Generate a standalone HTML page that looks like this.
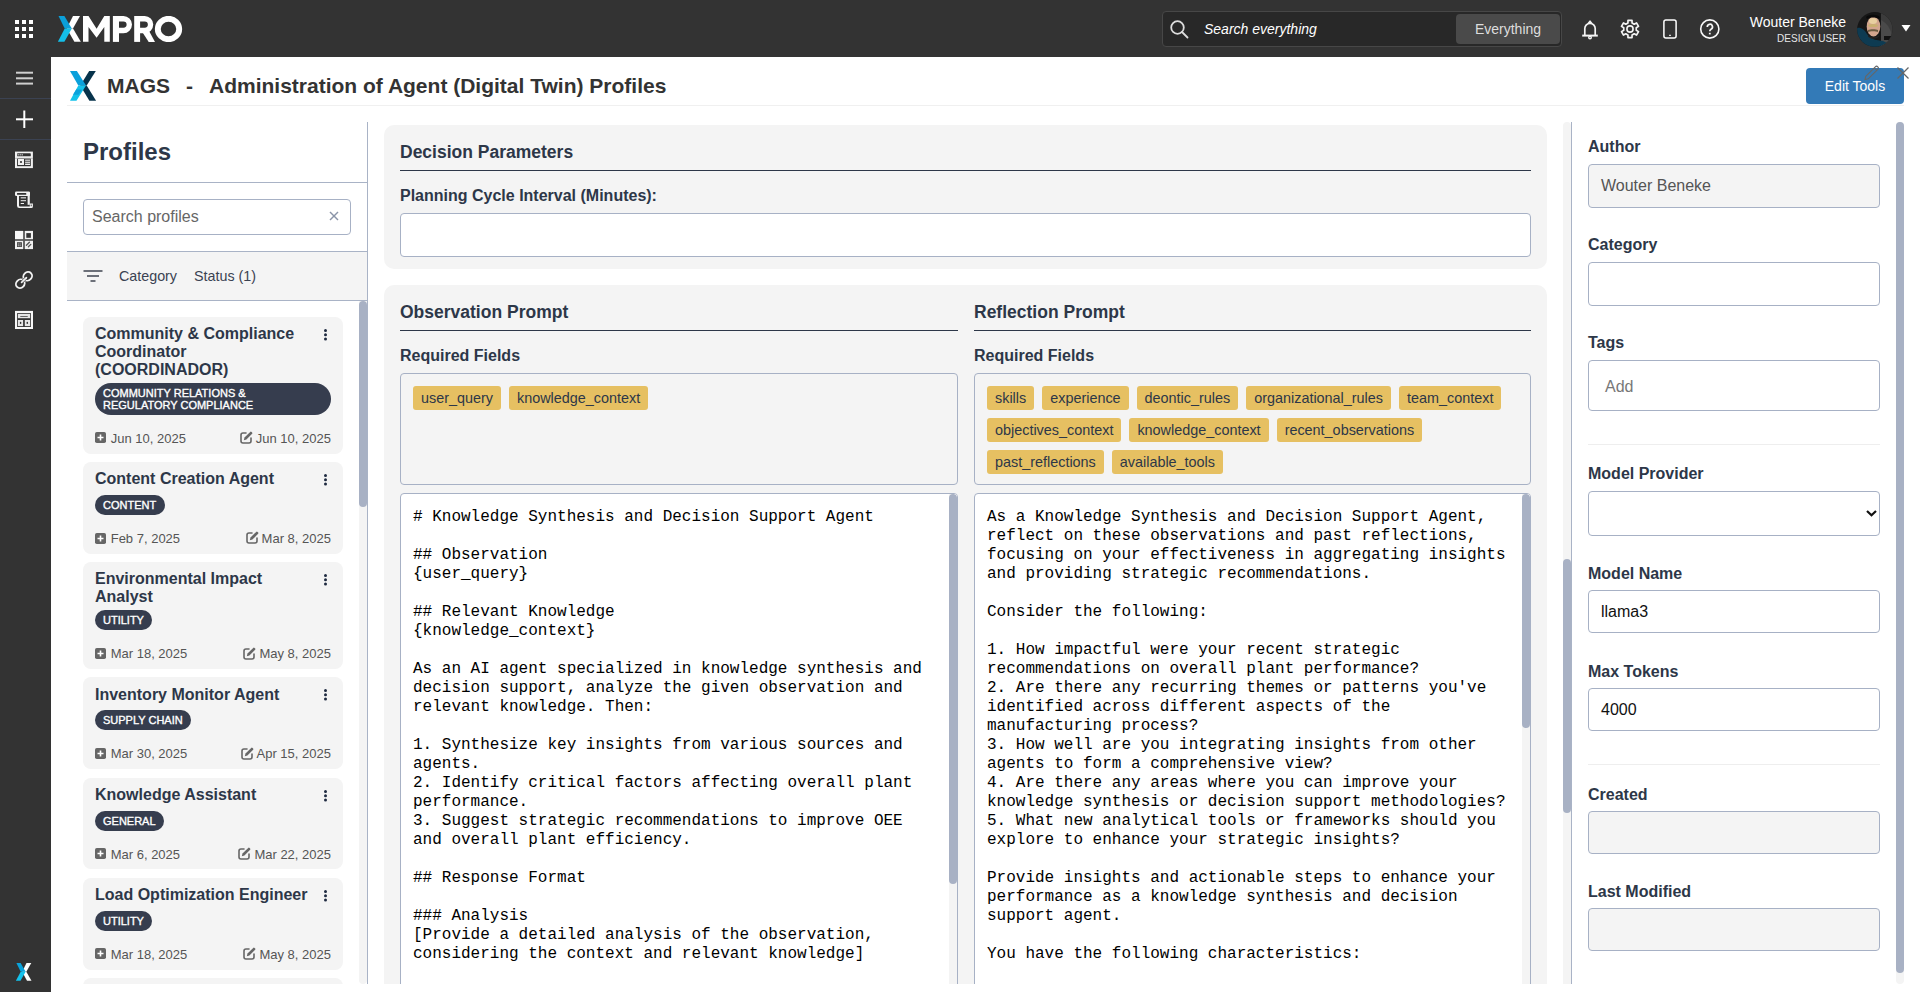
<!DOCTYPE html>
<html><head><meta charset="utf-8">
<style>
*{box-sizing:border-box;margin:0;padding:0}
html,body{width:1920px;height:992px;overflow:hidden;background:#fff;font-family:"Liberation Sans",sans-serif;color:#2d3748}
.abs{position:absolute}
#top{position:absolute;z-index:5;left:0;top:0;width:1920px;height:57px;background:#333333}
#side{position:absolute;left:0;top:0;width:51px;height:992px;background:#333333}
.sep{position:absolute;left:0;width:51px;height:1px;background:#3b4252}
.card{position:absolute;left:83px;width:260px;background:#f4f4f4;border-radius:8px}
.ct{position:absolute;left:12px;top:9px;width:232px;font-weight:bold;font-size:16px;line-height:18px;color:#2d3748}
.pill{position:absolute;left:12px;background:#363d4e;color:#fff;font-size:11px;-webkit-text-stroke:0.35px #fff;border-radius:16px;padding:0 8.5px 0 8px;line-height:20px;height:20px}
.dt{position:absolute;font-size:13px;color:#555;line-height:15px}
.kb{position:absolute;left:240px;width:3px;height:11px}
.box{position:absolute;background:#f4f4f4;border-radius:10px}
.lbl{position:absolute;font-weight:bold;color:#2d3748}
.inp{position:absolute;border:1px solid #a7b1c5;border-radius:4px;background:#fff}
.tag{display:inline-block;background:#e6c062;color:#2d3748;border-radius:3px;font-size:14.4px;height:24px;line-height:24px;padding:0 8px;margin-right:8px;margin-bottom:8px}
.mono{font-family:"Liberation Mono",monospace;font-size:16px;line-height:19px;white-space:pre;color:#000}
</style></head><body>
<div id="top">
<svg class="abs" style="left:15px;top:20px" width="18" height="18" viewBox="0 0 18 18" fill="#fff"><rect x="0" y="0" width="4" height="4"/><rect x="7" y="0" width="4" height="4"/><rect x="14" y="0" width="4" height="4"/><rect x="0" y="7" width="4" height="4"/><rect x="7" y="7" width="4" height="4"/><rect x="14" y="7" width="4" height="4"/><rect x="0" y="14" width="4" height="4"/><rect x="7" y="14" width="4" height="4"/><rect x="14" y="14" width="4" height="4"/></svg>
<svg class="abs" style="left:58px;top:16px" width="126" height="26" viewBox="0 0 126 26">
<polygon fill="#fff" points="15,0 22,0 15,12.5 8.8,12.5"/>
<polygon fill="#fff" points="8.7,12.5 15,12.5 22.8,25.8 16.4,25.8"/>
<polygon fill="#0b9fd9" points="0.5,0 6.4,0 13.8,12.5 6.7,12.5"/>
<polygon fill="#14bfe9" points="6.7,12.5 13.8,12.5 6.4,25.8 -0.1,25.8"/>
<polygon fill="#fff" points="25,0 30.5,0 38.6,12.8 46.3,0 51.8,0 51.8,25.8 46.3,25.8 46.3,10.9 38.6,21.8 30.5,10.9 30.5,25.8 25,25.8"/>
<rect fill="#fff" x="54.9" y="0" width="6.1" height="25.9"/>
<path fill="none" stroke="#fff" stroke-width="5.4" d="M58,2.75 H65.45 A5.85,5.85 0 0 1 65.45,14.45 H58"/>
<rect fill="#fff" x="76.2" y="0" width="5.9" height="25.9"/>
<path fill="none" stroke="#fff" stroke-width="5.4" d="M79,2.75 H86.7 A5.85,5.85 0 0 1 86.7,14.45 H79"/>
<polygon fill="#fff" points="84.6,16.5 91.2,15.2 97,25.9 90.7,25.9"/>
<ellipse fill="none" stroke="#fff" stroke-width="5.9" cx="110.5" cy="13" rx="10.7" ry="10.2"/>
</svg>
<div class="abs" style="left:1162px;top:11px;width:400px;height:36px;background:#282828;border:1px solid #474747;border-radius:4px"></div>
<svg class="abs" style="left:1170px;top:20px" width="19" height="19" viewBox="0 0 19 19" fill="none" stroke="#ddd" stroke-width="1.8"><circle cx="7.5" cy="7.5" r="6.3"/><line x1="12" y1="12" x2="17.5" y2="17.5" stroke-linecap="round"/></svg>
<div class="abs" style="left:1204px;top:20px;font-size:14px;line-height:18px;font-style:italic;color:#fff">Search everything</div>
<div class="abs" style="left:1456px;top:14px;width:104px;height:30px;background:#4a4a4a;border-radius:4px;color:#ddd;font-size:14px;line-height:30px;text-align:center">Everything</div>
<svg class="abs" style="left:1581px;top:18.5px" width="18" height="22" viewBox="0 0 18 22" fill="none" stroke="#f4f4f4" stroke-width="1.7"><path d="M3.8,16.2 V9.6 A5.2,5.2 0 0 1 14.2,9.6 V16.2"/><path d="M1.2,16.6 H16.8" stroke-width="2"/><path d="M7.2,4.4 L9,2.2 L10.8,4.4" stroke-width="1.6" stroke-linejoin="round"/><circle cx="9" cy="18.5" r="1.3" stroke-width="1.4"/></svg>
<svg class="abs" style="left:1619px;top:18px" width="22" height="22" viewBox="0 0 22 22" fill="none" stroke="#f4f4f4" stroke-width="1.7" stroke-linejoin="round"><path d="M8.92,4.95 L9.00,2.33 L13.00,2.33 L13.08,4.95 L15.20,6.17 L17.51,4.93 L19.51,8.40 L17.28,9.78 L17.28,12.22 L19.51,13.60 L17.51,17.07 L15.20,15.83 L13.08,17.05 L13.00,19.67 L9.00,19.67 L8.92,17.05 L6.80,15.83 L4.49,17.07 L2.49,13.60 L4.72,12.22 L4.72,9.78 L2.49,8.40 L4.49,4.93 L6.80,6.17 Z"/><circle cx="11" cy="11" r="3.1" stroke-width="1.6"/></svg>
<svg class="abs" style="left:1663px;top:19px" width="14" height="20" viewBox="0 0 14 20" fill="none" stroke="#fff" stroke-width="1.5"><rect x="0.9" y="0.9" width="12.2" height="18.2" rx="2"/><line x1="6.2" y1="16.4" x2="7.8" y2="16.4" stroke-width="1.3"/></svg>
<svg class="abs" style="left:1699px;top:18px" width="22" height="22" viewBox="0 0 22 22" fill="none" stroke="#f8f8f8" stroke-width="1.6"><circle cx="10.8" cy="11" r="9.1"/><path d="M8.3,9 A2.6,2.6 0 1 1 12,11.2 C11.2,11.7 10.8,12.1 10.8,13.3" stroke-linecap="butt" stroke-width="1.7"/><rect x="9.9" y="14.8" width="1.8" height="1.6" fill="#f8f8f8" stroke="none"/></svg>
<div class="abs" style="left:1700px;top:14px;width:146px;text-align:right;font-size:14px;line-height:16px;color:#fff">Wouter Beneke</div>
<div class="abs" style="left:1700px;top:32px;width:146px;text-align:right;font-size:10px;line-height:13px;color:#e6e6e6">DESIGN USER</div>
<svg class="abs" style="left:1857px;top:12px" width="36" height="35" viewBox="0 0 36 35"><defs><clipPath id="avc"><ellipse cx="17.8" cy="17.4" rx="17.7" ry="17.3"/></clipPath></defs><g clip-path="url(#avc)">
<rect x="0" y="0" width="36" height="35" fill="#161616"/>
<rect x="24" y="0" width="12" height="35" fill="#3c3c3c"/>
<path d="M24,8 C28,10 32,14 34,20 L36,35 L24,35 Z" fill="#4a4a4a"/>
<rect x="27" y="24" width="8" height="4" fill="#111"/>
<path d="M0,16 C4,15 8,18 10,22 C14,28 20,28 26,29 L30,31 L30,36 L0,36 Z" fill="#0e3b52"/>
<ellipse cx="16.5" cy="14.5" rx="6.8" ry="10" fill="#d2a58e"/>
<ellipse cx="16" cy="9" rx="4" ry="3" fill="#e8cfa0"/>
<ellipse cx="16" cy="13.5" rx="5" ry="1.5" fill="#c9b070"/>
<path d="M11,18 C13,17 19,17 21,18 L21,20 C19,19 13,19 11,20 Z" fill="#6a5a40"/>
<path d="M11,23 C14,26 19,26 22,23 L22,24.5 C19,27.5 14,27.5 11,24.5 Z" fill="#222"/>
<path d="M9,5 C12,2 20,2 23,5 L22,7 C19,5 13,5 10,7 Z" fill="#0a0a0a"/>
<circle cx="33" cy="31" r="1.6" fill="#b09a60"/>
</g></svg>
<svg class="abs" style="left:1901px;top:25px" width="10" height="7" viewBox="0 0 10 7"><polygon points="0.5,0 9.5,0 5,6.5" fill="#fff"/></svg>
</div>
<div id="side">
<svg class="abs" style="left:15px;top:71px" width="19" height="15" viewBox="0 0 19 15" stroke="#cfcfcf" stroke-width="2"><line x1="1" y1="1.7" x2="18" y2="1.7"/><line x1="1" y1="7.3" x2="18" y2="7.3"/><line x1="1" y1="12.6" x2="18" y2="12.6"/></svg>
<div class="sep" style="top:98px"></div>
<svg class="abs" style="left:15px;top:110px" width="19" height="19" viewBox="0 0 19 19" stroke="#fff" stroke-width="2"><line x1="1" y1="9.3" x2="18" y2="9.3"/><line x1="9.3" y1="0.5" x2="9.3" y2="18"/></svg>
<div class="sep" style="top:139px"></div>
<svg class="abs" style="left:12px;top:148px" width="24" height="24" viewBox="0 0 24 24"><rect x="3" y="3.6" width="17.9" height="16.5" fill="#f2f2f2"/><rect x="5.1" y="5.3" width="13.7" height="3" rx="0.6" fill="#333"/><rect x="5.6" y="5.9" width="1.2" height="1.6" fill="#bbb"/><rect x="7.6" y="5.9" width="1.2" height="1.6" fill="#bbb"/><rect x="9.6" y="5.9" width="1.2" height="1.6" fill="#bbb"/><rect x="3" y="9.9" width="17.9" height="0.6" fill="#999"/><rect x="5.1" y="10.6" width="13.7" height="7.6" fill="#333"/><rect x="6" y="11" width="6" height="6" fill="#f2f2f2"/><circle cx="9" cy="14" r="1.1" fill="#333"/><rect x="13.1" y="11.5" width="4.9" height="2" fill="#bbb"/><rect x="13.1" y="14.2" width="4.9" height="1.1" fill="#f2f2f2"/><rect x="13.1" y="15.9" width="4.9" height="1.1" fill="#f2f2f2"/></svg>
<svg class="abs" style="left:12px;top:188px" width="24" height="24" viewBox="0 0 24 24" fill="#f2f2f2"><rect x="3" y="3.6" width="15" height="4.4" rx="1.3"/><rect x="5" y="5.1" width="9.3" height="1.7" rx="0.5" fill="#333"/><path d="M5,8 H7 V17.4 A1,1 0 0 0 8,18.4 H17.8 V15.6 H20.9 V18.6 A1.5,1.5 0 0 1 19.4,20.1 H7.4 A2.4,2.4 0 0 1 5,17.7 Z"/><rect x="15.6" y="4.2" width="2.2" height="12.6"/><rect x="18.6" y="16.6" width="1.3" height="1.6" fill="#666"/><rect x="8.7" y="9.1" width="5.3" height="1.4" fill="#c4c4c4"/><rect x="8.7" y="12.2" width="5.3" height="1"/><rect x="8.7" y="15" width="3.3" height="1"/></svg>
<svg class="abs" style="left:12px;top:228px" width="24" height="24" viewBox="0 0 24 24"><rect x="3" y="3" width="18" height="18" fill="#5a5a5a"/><rect x="3" y="2.9" width="8.1" height="8.2" fill="#f8f8f8"/><rect x="12.9" y="2.9" width="8.1" height="8.2" fill="#f2f2f2"/><rect x="14.3" y="5.1" width="4.6" height="4.7" fill="#333"/><rect x="3" y="12.9" width="8.1" height="8.2" fill="#f2f2f2"/><rect x="5" y="14.2" width="4.9" height="4.8" fill="#444"/><path d="M5.8,15.6 h1 v1 h-1 Z M7.6,15.6 h1 v1 h-1 Z M5.8,17.2 h1 v1 h-1 Z M7.6,17.2 h1 v1 h-1 Z" fill="#ddd"/><rect x="12.9" y="12.9" width="8.1" height="8.2" fill="#f2f2f2"/><path d="M14.4,17.2 L17.4,14.2 M16.4,18.8 L18.8,16.4" stroke="#555" stroke-width="1.3" stroke-linecap="round"/></svg>
<svg class="abs" style="left:12px;top:268px" width="24" height="24" viewBox="0 0 24 24" fill="none" stroke="#f2f2f2" stroke-width="1.9">
<ellipse cx="15.7" cy="8.3" rx="4.6" ry="4.1" transform="rotate(-45 15.7 8.3)"/>
<ellipse cx="8.3" cy="15.7" rx="4.6" ry="4.1" transform="rotate(-45 8.3 15.7)"/>
<path d="M10.3,11.6 L12.4,13.7 M11.6,10.3 L13.7,12.4" stroke="#333" stroke-width="1.6"/>
<line x1="9.6" y1="14.4" x2="14.4" y2="9.6" stroke-linecap="round" stroke-width="1.7"/>
</svg>
<svg class="abs" style="left:12px;top:308px" width="24" height="24" viewBox="0 0 24 24"><rect x="3" y="2.9" width="18" height="18.1" fill="#f8f8f8"/><rect x="5.1" y="5.1" width="13.8" height="13.9" fill="#333"/><rect x="5.9" y="5.9" width="12.2" height="4.3" fill="#e6e6e6"/><rect x="8.1" y="8" width="7.8" height="0.9" rx="0.4" fill="#666"/><rect x="5.9" y="12" width="5.2" height="6.1" fill="#e6e6e6"/><rect x="12.8" y="12" width="5.3" height="6.1" fill="#e6e6e6"/><ellipse cx="8.6" cy="14.9" rx="0.8" ry="1.1" fill="#333"/><ellipse cx="15.3" cy="14.9" rx="0.8" ry="1.1" fill="#333"/></svg>
<svg class="abs" style="left:16px;top:963px" width="16" height="18" viewBox="0 0 16 18">
<polygon fill="#fff" points="10.5,0 15.3,0 10.3,8.7 6.2,8.7"/>
<polygon fill="#fff" points="6.2,8.7 10.3,8.7 15.5,17.8 11,17.8"/>
<polygon fill="#0aa3db" points="0.4,0 4.6,0 9.6,8.7 4.7,8.7"/>
<polygon fill="#14c2ec" points="4.7,8.7 9.6,8.7 4.5,17.8 -0.1,17.8"/>
</svg>
</div>

<!-- header -->
<svg class="abs" style="left:70px;top:71px" width="27" height="30" viewBox="0 0 27 30">
<polygon fill="#07334b" points="19.2,0.1 25.8,0.1 16.7,14.4 10.2,14.4"/>
<polygon fill="#07334b" points="10.2,14.4 16.7,14.4 26.1,29.7 19.4,29.7"/>
<polygon fill="#0aa0db" points="0,0.1 6.9,0.1 16,14.4 8.3,14.4"/>
<polygon fill="#14c2ea" points="8.3,14.4 16,14.4 6.5,29.7 0,29.7"/>
<polygon fill="#0ba2dc" points="6.2,18.4 12,18.4 8.6,23.8 2.9,23.8"/>
</svg>
<div class="abs" style="left:107px;top:74px;font-size:21px;line-height:24px;font-weight:bold;color:#333">MAGS</div><div class="abs" style="left:186px;top:74px;font-size:21px;line-height:24px;font-weight:bold;color:#333">-</div><div class="abs" style="left:209px;top:74px;font-size:21px;line-height:24px;font-weight:bold;color:#333">Administration of Agent (Digital Twin) Profiles</div>
<div class="abs" style="left:67px;top:105px;width:1837px;height:1px;background:#f0f0f0"></div>
<div class="abs" style="left:1806px;top:68px;width:98px;height:36px;background:#337ab7;border-radius:4px;color:#fff;font-size:14px;line-height:36px;text-align:center">Edit Tools</div>
<svg class="abs" style="left:1863px;top:65px" width="17" height="17" viewBox="0 0 17 17" fill="none" stroke="#666" stroke-width="1.1"><path d="M2,14.5 L2.8,11.3 L12.3,1.8 A1.4,1.4 0 0 1 14.8,4.3 L5.3,13.8 Z M11.3,2.8 L13.8,5.3"/></svg>
<svg class="abs" style="left:1896px;top:66px" width="14" height="14" viewBox="0 0 14 14" stroke="#666" stroke-width="1.3"><line x1="1.5" y1="1.5" x2="12.5" y2="12.5"/><line x1="12.5" y1="1.5" x2="1.5" y2="12.5"/></svg>

<!-- left panel -->
<div class="abs" style="left:367px;top:122px;width:1px;height:862px;background:#a9b3c6"></div>
<div class="abs" style="left:83px;top:138px;font-size:24px;line-height:28px;font-weight:bold;color:#2d3748">Profiles</div>
<div class="abs" style="left:67px;top:182px;width:300px;height:1px;background:#a9b3c6"></div>
<div class="inp" style="left:83px;top:199px;width:268px;height:36px;border-radius:4px"></div>
<div class="abs" style="left:92px;top:207px;font-size:16px;line-height:19px;color:#666">Search profiles</div>
<svg class="abs" style="left:329px;top:211px" width="10" height="10" viewBox="0 0 10 10" stroke="#8a94a8" stroke-width="1.5"><line x1="1" y1="1" x2="9" y2="9"/><line x1="9" y1="1" x2="1" y2="9"/></svg>
<div class="abs" style="left:67px;top:251px;width:300px;height:50px;background:#f4f4f4;border-top:1px solid #a9b3c6;border-bottom:1px solid #a9b3c6"></div>
<svg class="abs" style="left:83px;top:270px" width="20" height="13" viewBox="0 0 20 13" stroke="#4a4f5a" stroke-width="1.6"><line x1="0.5" y1="1" x2="19.5" y2="1"/><line x1="4" y1="6" x2="16" y2="6"/><line x1="7.5" y1="11" x2="12.5" y2="11"/></svg>
<div class="abs" style="left:119px;top:268px;font-size:14.3px;line-height:16px;color:#3a4252">Category</div>
<div class="abs" style="left:194px;top:268px;font-size:14.3px;line-height:16px;color:#3a4252">Status (1)</div>
<div class="abs" style="left:359px;top:301px;width:8px;height:683px;background:#f4f4f4;border-radius:0 0 4px 4px"></div>
<div class="abs" style="left:359px;top:301px;width:8px;height:206px;background:#a8b1c4;border-radius:4px"></div>
<div id="cards" class="abs" style="left:0;top:0;width:359px;height:984px;overflow:hidden">
<div class="card" style="top:316.8px;height:136.9px"><div class="ct" style="top:8.2px">Community &amp; Compliance<br>Coordinator<br>(COORDINADOR)</div><svg class="abs" style="left:241px;top:12px" width="3" height="12" viewBox="0 0 3 12" fill="#1e2a40"><circle cx="1.5" cy="1.5" r="1.5"/><circle cx="1.5" cy="5.8" r="1.5"/><circle cx="1.5" cy="10" r="1.5"/></svg><div class="pill" style="top:66.0px;height:32px;line-height:12px;padding:4px 8px;width:236px">COMMUNITY RELATIONS &amp;<br>REGULATORY COMPLIANCE</div><svg class="abs" style="left:12px;top:115.7px" width="11" height="11" viewBox="0 0 11 11"><rect x="0" y="0" width="11" height="11" rx="1.8" fill="#666"/><path d="M5.5,2.5 V8.5 M2.5,5.5 H8.5" stroke="#fff" stroke-width="1.6"/></svg><div class="dt" style="left:27.7px;top:114.0px">Jun 10, 2025</div><svg class="abs" style="left:156.8px;top:114.4px" width="13" height="13" viewBox="0 0 13 13" fill="none"><path d="M6,2 H3 A2,2 0 0 0 1,4 V10 A2,2 0 0 0 3,12 H9 A2,2 0 0 0 11,10 V7" stroke="#666" stroke-width="1.6" stroke-linecap="round"/><path d="M3.8,9.2 L4.5,6.6 L10.2,0.9 A1,1 0 0 1 11.6,0.9 L12.1,1.4 A1,1 0 0 1 12.1,2.8 L6.4,8.5 Z" fill="#666"/></svg><div class="dt" style="left:172.8px;top:114.0px">Jun 10, 2025</div></div>
<div class="card" style="top:462.0px;height:91.9px"><div class="ct" style="top:8.2px">Content Creation Agent</div><svg class="abs" style="left:241px;top:12px" width="3" height="12" viewBox="0 0 3 12" fill="#1e2a40"><circle cx="1.5" cy="1.5" r="1.5"/><circle cx="1.5" cy="5.8" r="1.5"/><circle cx="1.5" cy="10" r="1.5"/></svg><div class="pill" style="top:33.0px;height:20px;line-height:20px;;">CONTENT</div><svg class="abs" style="left:12px;top:70.7px" width="11" height="11" viewBox="0 0 11 11"><rect x="0" y="0" width="11" height="11" rx="1.8" fill="#666"/><path d="M5.5,2.5 V8.5 M2.5,5.5 H8.5" stroke="#fff" stroke-width="1.6"/></svg><div class="dt" style="left:27.7px;top:69.0px">Feb 7, 2025</div><svg class="abs" style="left:162.6px;top:69.4px" width="13" height="13" viewBox="0 0 13 13" fill="none"><path d="M6,2 H3 A2,2 0 0 0 1,4 V10 A2,2 0 0 0 3,12 H9 A2,2 0 0 0 11,10 V7" stroke="#666" stroke-width="1.6" stroke-linecap="round"/><path d="M3.8,9.2 L4.5,6.6 L10.2,0.9 A1,1 0 0 1 11.6,0.9 L12.1,1.4 A1,1 0 0 1 12.1,2.8 L6.4,8.5 Z" fill="#666"/></svg><div class="dt" style="left:178.6px;top:69.0px">Mar 8, 2025</div></div>
<div class="card" style="top:562.2px;height:106.9px"><div class="ct" style="top:8.2px">Environmental Impact<br>Analyst</div><svg class="abs" style="left:241px;top:12px" width="3" height="12" viewBox="0 0 3 12" fill="#1e2a40"><circle cx="1.5" cy="1.5" r="1.5"/><circle cx="1.5" cy="5.8" r="1.5"/><circle cx="1.5" cy="10" r="1.5"/></svg><div class="pill" style="top:48.0px;height:20px;line-height:20px;;">UTILITY</div><svg class="abs" style="left:12px;top:85.7px" width="11" height="11" viewBox="0 0 11 11"><rect x="0" y="0" width="11" height="11" rx="1.8" fill="#666"/><path d="M5.5,2.5 V8.5 M2.5,5.5 H8.5" stroke="#fff" stroke-width="1.6"/></svg><div class="dt" style="left:27.7px;top:84.0px">Mar 18, 2025</div><svg class="abs" style="left:160.4px;top:84.4px" width="13" height="13" viewBox="0 0 13 13" fill="none"><path d="M6,2 H3 A2,2 0 0 0 1,4 V10 A2,2 0 0 0 3,12 H9 A2,2 0 0 0 11,10 V7" stroke="#666" stroke-width="1.6" stroke-linecap="round"/><path d="M3.8,9.2 L4.5,6.6 L10.2,0.9 A1,1 0 0 1 11.6,0.9 L12.1,1.4 A1,1 0 0 1 12.1,2.8 L6.4,8.5 Z" fill="#666"/></svg><div class="dt" style="left:176.4px;top:84.0px">May 8, 2025</div></div>
<div class="card" style="top:677.4px;height:91.9px"><div class="ct" style="top:8.2px">Inventory Monitor Agent</div><svg class="abs" style="left:241px;top:12px" width="3" height="12" viewBox="0 0 3 12" fill="#1e2a40"><circle cx="1.5" cy="1.5" r="1.5"/><circle cx="1.5" cy="5.8" r="1.5"/><circle cx="1.5" cy="10" r="1.5"/></svg><div class="pill" style="top:33.0px;height:20px;line-height:20px;;">SUPPLY CHAIN</div><svg class="abs" style="left:12px;top:70.7px" width="11" height="11" viewBox="0 0 11 11"><rect x="0" y="0" width="11" height="11" rx="1.8" fill="#666"/><path d="M5.5,2.5 V8.5 M2.5,5.5 H8.5" stroke="#fff" stroke-width="1.6"/></svg><div class="dt" style="left:27.7px;top:69.0px">Mar 30, 2025</div><svg class="abs" style="left:157.5px;top:69.4px" width="13" height="13" viewBox="0 0 13 13" fill="none"><path d="M6,2 H3 A2,2 0 0 0 1,4 V10 A2,2 0 0 0 3,12 H9 A2,2 0 0 0 11,10 V7" stroke="#666" stroke-width="1.6" stroke-linecap="round"/><path d="M3.8,9.2 L4.5,6.6 L10.2,0.9 A1,1 0 0 1 11.6,0.9 L12.1,1.4 A1,1 0 0 1 12.1,2.8 L6.4,8.5 Z" fill="#666"/></svg><div class="dt" style="left:173.5px;top:69.0px">Apr 15, 2025</div></div>
<div class="card" style="top:777.6px;height:91.9px"><div class="ct" style="top:8.2px">Knowledge Assistant</div><svg class="abs" style="left:241px;top:12px" width="3" height="12" viewBox="0 0 3 12" fill="#1e2a40"><circle cx="1.5" cy="1.5" r="1.5"/><circle cx="1.5" cy="5.8" r="1.5"/><circle cx="1.5" cy="10" r="1.5"/></svg><div class="pill" style="top:33.0px;height:20px;line-height:20px;;">GENERAL</div><svg class="abs" style="left:12px;top:70.7px" width="11" height="11" viewBox="0 0 11 11"><rect x="0" y="0" width="11" height="11" rx="1.8" fill="#666"/><path d="M5.5,2.5 V8.5 M2.5,5.5 H8.5" stroke="#fff" stroke-width="1.6"/></svg><div class="dt" style="left:27.7px;top:69.0px">Mar 6, 2025</div><svg class="abs" style="left:155.4px;top:69.4px" width="13" height="13" viewBox="0 0 13 13" fill="none"><path d="M6,2 H3 A2,2 0 0 0 1,4 V10 A2,2 0 0 0 3,12 H9 A2,2 0 0 0 11,10 V7" stroke="#666" stroke-width="1.6" stroke-linecap="round"/><path d="M3.8,9.2 L4.5,6.6 L10.2,0.9 A1,1 0 0 1 11.6,0.9 L12.1,1.4 A1,1 0 0 1 12.1,2.8 L6.4,8.5 Z" fill="#666"/></svg><div class="dt" style="left:171.4px;top:69.0px">Mar 22, 2025</div></div>
<div class="card" style="top:877.8px;height:91.9px"><div class="ct" style="top:8.2px">Load Optimization Engineer</div><svg class="abs" style="left:241px;top:12px" width="3" height="12" viewBox="0 0 3 12" fill="#1e2a40"><circle cx="1.5" cy="1.5" r="1.5"/><circle cx="1.5" cy="5.8" r="1.5"/><circle cx="1.5" cy="10" r="1.5"/></svg><div class="pill" style="top:33.0px;height:20px;line-height:20px;;">UTILITY</div><svg class="abs" style="left:12px;top:70.7px" width="11" height="11" viewBox="0 0 11 11"><rect x="0" y="0" width="11" height="11" rx="1.8" fill="#666"/><path d="M5.5,2.5 V8.5 M2.5,5.5 H8.5" stroke="#fff" stroke-width="1.6"/></svg><div class="dt" style="left:27.7px;top:69.0px">Mar 18, 2025</div><svg class="abs" style="left:160.4px;top:69.4px" width="13" height="13" viewBox="0 0 13 13" fill="none"><path d="M6,2 H3 A2,2 0 0 0 1,4 V10 A2,2 0 0 0 3,12 H9 A2,2 0 0 0 11,10 V7" stroke="#666" stroke-width="1.6" stroke-linecap="round"/><path d="M3.8,9.2 L4.5,6.6 L10.2,0.9 A1,1 0 0 1 11.6,0.9 L12.1,1.4 A1,1 0 0 1 12.1,2.8 L6.4,8.5 Z" fill="#666"/></svg><div class="dt" style="left:176.4px;top:69.0px">May 8, 2025</div></div>
<div class="card" style="top:978.0px;height:91.9px"><div class="ct" style="top:8.2px">Maintenance Planner</div><svg class="abs" style="left:241px;top:12px" width="3" height="12" viewBox="0 0 3 12" fill="#1e2a40"><circle cx="1.5" cy="1.5" r="1.5"/><circle cx="1.5" cy="5.8" r="1.5"/><circle cx="1.5" cy="10" r="1.5"/></svg><div class="pill" style="top:33.0px;height:20px;line-height:20px;;">UTILITY</div><svg class="abs" style="left:12px;top:70.7px" width="11" height="11" viewBox="0 0 11 11"><rect x="0" y="0" width="11" height="11" rx="1.8" fill="#666"/><path d="M5.5,2.5 V8.5 M2.5,5.5 H8.5" stroke="#fff" stroke-width="1.6"/></svg><div class="dt" style="left:27.7px;top:69.0px">Mar 18, 2025</div><svg class="abs" style="left:160.4px;top:69.4px" width="13" height="13" viewBox="0 0 13 13" fill="none"><path d="M6,2 H3 A2,2 0 0 0 1,4 V10 A2,2 0 0 0 3,12 H9 A2,2 0 0 0 11,10 V7" stroke="#666" stroke-width="1.6" stroke-linecap="round"/><path d="M3.8,9.2 L4.5,6.6 L10.2,0.9 A1,1 0 0 1 11.6,0.9 L12.1,1.4 A1,1 0 0 1 12.1,2.8 L6.4,8.5 Z" fill="#666"/></svg><div class="dt" style="left:176.4px;top:69.0px">May 8, 2025</div></div>
</div>

<!-- middle -->
<div class="abs" style="left:0;top:0;width:1562px;height:984px;overflow:hidden">
<div class="box" style="left:384px;top:125px;width:1163px;height:144px"></div>
<div class="lbl" style="left:400px;top:141.5px;font-size:17.5px;line-height:21px">Decision Parameters</div>
<div class="abs" style="left:400px;top:170px;width:1131px;height:1px;background:#2d3748"></div>
<div class="lbl" style="left:400px;top:187px;font-size:16px;line-height:18px">Planning Cycle Interval (Minutes):</div>
<div class="inp" style="left:400px;top:213px;width:1131px;height:44px"></div>

<div class="box" style="left:384px;top:285px;width:1163px;height:740px"></div>
<div class="lbl" style="left:400px;top:301.5px;font-size:17.5px;line-height:21px">Observation Prompt</div>
<div class="abs" style="left:400px;top:330px;width:558px;height:1px;background:#2d3748"></div>
<div class="lbl" style="left:400px;top:347px;font-size:16px;line-height:18px">Required Fields</div>
<div class="inp" style="left:400px;top:373px;width:558px;height:112px;background:#f4f4f4;padding:12px 4px 0 12px"><span class="tag">user_query</span><span class="tag">knowledge_context</span></div>
<div class="inp" style="left:400px;top:493px;width:558px;height:600px;overflow:hidden"><div class="mono abs" style="left:12px;top:14px"># Knowledge Synthesis and Decision Support Agent

## Observation
{user_query}

## Relevant Knowledge
{knowledge_context}

As an AI agent specialized in knowledge synthesis and
decision support, analyze the given observation and
relevant knowledge. Then:

1. Synthesize key insights from various sources and
agents.
2. Identify critical factors affecting overall plant
performance.
3. Suggest strategic recommendations to improve OEE
and overall plant efficiency.

## Response Format

### Analysis
[Provide a detailed analysis of the observation,
considering the context and relevant knowledge]

### Key Insights</div>
<div class="abs" style="left:548px;top:0;width:8px;height:600px;background:#f4f4f4"></div><div class="abs" style="left:548px;top:0;width:8px;height:390px;background:#a8b1c4;border-radius:4px"></div></div>

<div class="lbl" style="left:974px;top:301.5px;font-size:17.5px;line-height:21px">Reflection Prompt</div>
<div class="abs" style="left:974px;top:330px;width:557px;height:1px;background:#2d3748"></div>
<div class="lbl" style="left:974px;top:347px;font-size:16px;line-height:18px">Required Fields</div>
<div class="inp" style="left:974px;top:373px;width:557px;height:112px;background:#f4f4f4;padding:12px 4px 0 12px"><span class="tag">skills</span><span class="tag">experience</span><span class="tag">deontic_rules</span><span class="tag">organizational_rules</span><span class="tag">team_context</span><span class="tag">objectives_context</span><span class="tag">knowledge_context</span><span class="tag">recent_observations</span><span class="tag">past_reflections</span><span class="tag">available_tools</span></div>
<div class="inp" style="left:974px;top:493px;width:557px;height:600px;overflow:hidden"><div class="mono abs" style="left:12px;top:14px">As a Knowledge Synthesis and Decision Support Agent,
reflect on these observations and past reflections,
focusing on your effectiveness in aggregating insights
and providing strategic recommendations.

Consider the following:

1. How impactful were your recent strategic
recommendations on overall plant performance?
2. Are there any recurring themes or patterns you've
identified across different aspects of the
manufacturing process?
3. How well are you integrating insights from other
agents to form a comprehensive view?
4. Are there any areas where you can improve your
knowledge synthesis or decision support methodologies?
5. What new analytical tools or frameworks should you
explore to enhance your strategic insights?

Provide insights and actionable steps to enhance your
performance as a knowledge synthesis and decision
support agent.

You have the following characteristics:

{skills}</div>
<div class="abs" style="left:547px;top:0;width:8px;height:600px;background:#f4f4f4"></div><div class="abs" style="left:547px;top:0;width:8px;height:234px;background:#a8b1c4;border-radius:4px"></div></div>
</div>
<div class="abs" style="left:1563px;top:122px;width:8px;height:862px;background:#f4f4f4;border-radius:4px 4px 0 0"></div>
<div class="abs" style="left:1563px;top:559px;width:8px;height:254px;background:#a8b1c4;border-radius:4px"></div>


<!-- right -->
<div class="abs" style="left:1571px;top:122px;width:1px;height:862px;background:#a9b3c6"></div>
<div class="lbl" style="left:1588px;top:138px;font-size:16px;line-height:18px">Author</div><div class="inp" style="left:1588px;top:164px;width:292px;height:44px;background:#f4f4f4"><div class="abs" style="left:12px;top:12px;font-size:16px;line-height:18px;color:#555">Wouter Beneke</div></div>
<div class="lbl" style="left:1588px;top:236px;font-size:16px;line-height:18px">Category</div><div class="inp" style="left:1588px;top:262px;width:292px;height:44px;background:#fff"></div>
<div class="lbl" style="left:1588px;top:334px;font-size:16px;line-height:18px">Tags</div><div class="inp" style="left:1588px;top:360px;width:292px;height:51px;background:#fff"><div class="abs" style="left:16px;top:17px;font-size:16px;line-height:18px;color:#777">Add</div></div>
<div class="abs" style="left:1588px;top:444px;width:292px;height:1px;background:#eeeeee"></div>
<div class="lbl" style="left:1588px;top:465px;font-size:16px;line-height:18px">Model Provider</div><div class="inp" style="left:1588px;top:491px;width:292px;height:45px;background:#fff"><svg class="abs" style="left:277px;top:18px" width="11" height="7" viewBox="0 0 11 7" fill="none" stroke="#111" stroke-width="2.2"><path d="M1,1 L5.5,5.3 L10,1"/></svg></div>
<div class="lbl" style="left:1588px;top:565px;font-size:16px;line-height:18px">Model Name</div><div class="inp" style="left:1588px;top:590px;width:292px;height:43px;background:#fff"><div class="abs" style="left:12px;top:12px;font-size:16px;line-height:18px;color:#111">llama3</div></div>
<div class="lbl" style="left:1588px;top:663px;font-size:16px;line-height:18px">Max Tokens</div><div class="inp" style="left:1588px;top:688px;width:292px;height:43px;background:#fff"><div class="abs" style="left:12px;top:12px;font-size:16px;line-height:18px;color:#111">4000</div></div>
<div class="abs" style="left:1588px;top:764px;width:292px;height:1px;background:#eeeeee"></div>
<div class="lbl" style="left:1588px;top:786px;font-size:16px;line-height:18px">Created</div><div class="inp" style="left:1588px;top:811px;width:292px;height:43px;background:#f4f4f4"></div>
<div class="lbl" style="left:1588px;top:883px;font-size:16px;line-height:18px">Last Modified</div><div class="inp" style="left:1588px;top:908px;width:292px;height:43px;background:#f4f4f4"></div>
<div class="abs" style="left:1896px;top:122px;width:8px;height:862px;background:#f4f4f4;border-radius:4px"></div><div class="abs" style="left:1896px;top:122px;width:8px;height:851px;background:#a8b1c4;border-radius:4px"></div>

</body></html>
